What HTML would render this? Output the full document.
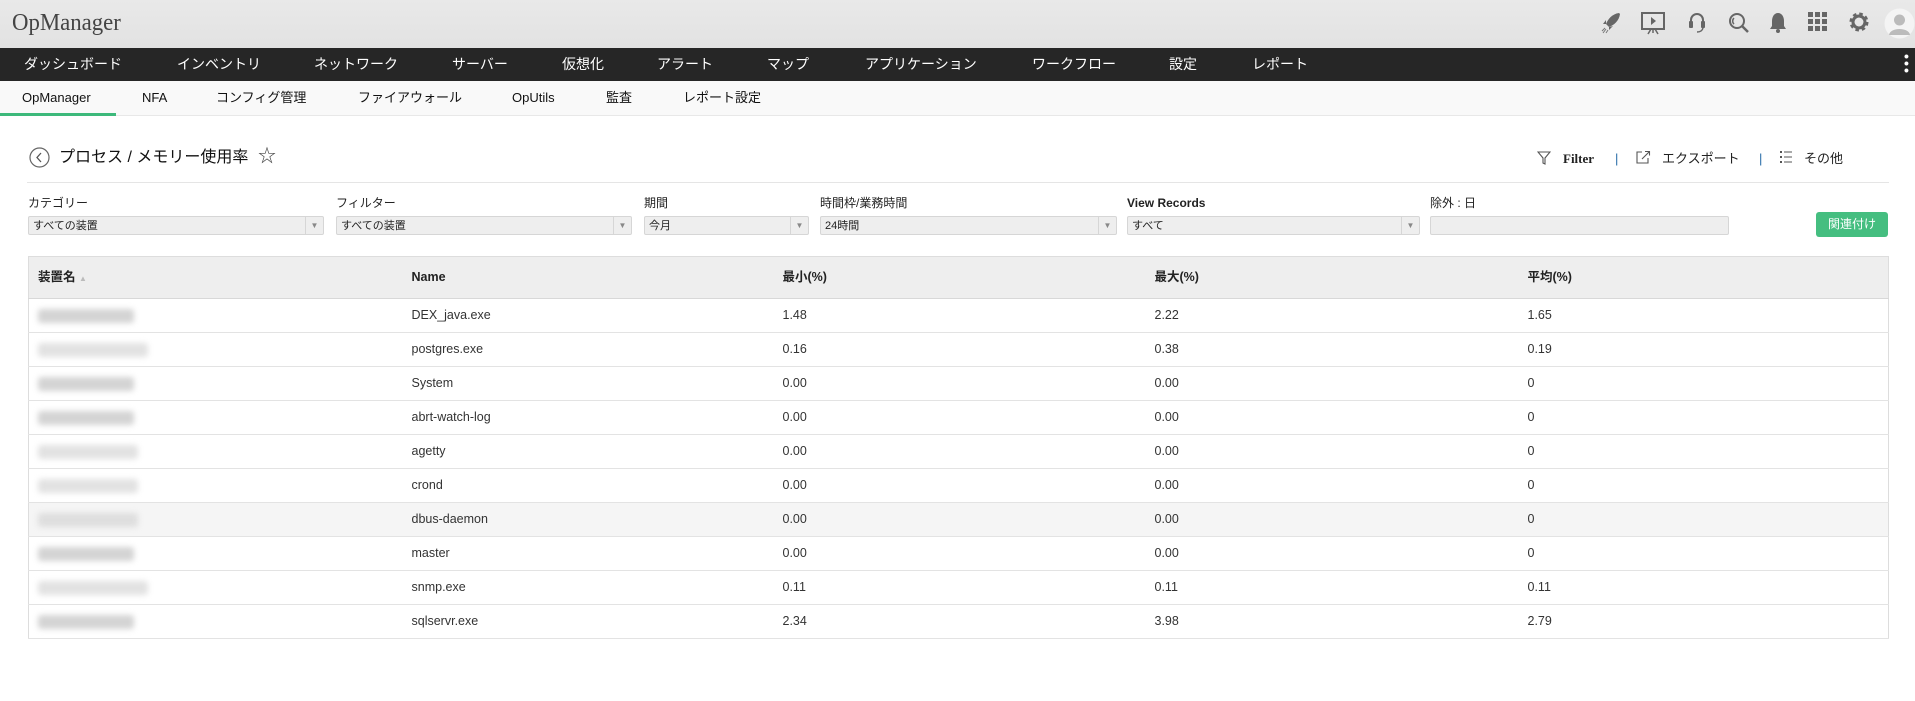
<!DOCTYPE html>
<html><head><meta charset="utf-8"><style>
*{box-sizing:border-box;margin:0;padding:0}
body{width:1915px;height:701px;overflow:hidden;background:#fff;font-family:"Liberation Sans","Noto Sans CJK JP",sans-serif;color:#222;position:relative}
.abs{position:absolute;white-space:nowrap;line-height:18px}
#hdr{position:absolute;left:0;top:0;width:1915px;height:48px;background:linear-gradient(#e9e9e9,#e2e2e2)}
#logo{left:12px;top:9px;font-family:"Liberation Serif","DejaVu Serif",serif;font-size:24px;line-height:28px;color:#444;transform:scaleX(.95);transform-origin:left}
#nav{position:absolute;left:0;top:48px;width:1915px;height:33px;background:#262626}
#nav span{position:absolute;top:8px;color:#fff;font-size:14px;line-height:17px}
#sub{position:absolute;left:0;top:81px;width:1915px;height:35px;background:#f9f9f9;border-bottom:1px solid #e8e8e8}
#sub span{position:absolute;top:9px;font-size:13px;line-height:16px;color:#111}
.lbl{position:absolute;top:196px;font-size:12px;line-height:14px;color:#222}
.sel{position:absolute;top:216px;height:19px;background:#eee;border:1px solid #d6d6d6;border-radius:2px;font-size:11px;line-height:14px;padding:2px 4px;color:#222}
.sel i{position:absolute;right:0;top:0;width:18px;height:17px;border-left:1px solid #d6d6d6;font-style:normal;color:#888;font-size:8px;text-align:center;line-height:17px}
table{position:absolute;left:28px;top:256px;width:1861px;border-collapse:collapse;border:1px solid #ddd;font-size:12.5px;line-height:15px}
th{height:42px;background:#eee;text-align:left;font-weight:bold;font-size:12.5px;border-bottom:1px solid #d8d8d8}
td{height:34px;border-bottom:1px solid #e3e3e3;color:#333}
th,td{padding-left:9px}
.b{display:inline-block;height:14px;background:#d4d4d4;filter:blur(3px);border-radius:3px;vertical-align:middle}
.ic{position:absolute;top:11px}
</style></head><body>
<div id="hdr"></div>
<div class="abs" id="logo">OpManager</div>
<svg class="ic" style="left:1600px" width="22" height="24" viewBox="0 0 22 24"><path d="M19 2 C12 3 8 8 6 13 L9 16 C14 14 19 10 20 3Z" fill="#666"/><path d="M6 13 L3 13 L6 9Z M9 16 L9 19 L13 15Z" fill="#666"/><path d="M5 17 L2 20 M6 18 L3 22 M8 19 L6 22" stroke="#777" stroke-width="1"/></svg>
<svg class="ic" style="left:1640px" width="26" height="26" viewBox="0 0 26 26"><rect x="2" y="2" width="22" height="16" fill="none" stroke="#666" stroke-width="2"/><path d="M11 6 L16 10 L11 14Z" fill="#666"/><path d="M13 18 V22 M8 23 L11 18 M18 23 L15 18" stroke="#666" stroke-width="1.5"/></svg>
<svg class="ic" style="left:1688px" width="18" height="24" viewBox="0 0 18 24"><path d="M3 12 V9 a6 6 0 0 1 12 0 V12" fill="none" stroke="#666" stroke-width="2"/><rect x="1" y="10" width="4" height="7" rx="1" fill="#666"/><rect x="13" y="10" width="4" height="7" rx="1" fill="#666"/><path d="M15 17 Q14 21 9 21" fill="none" stroke="#666" stroke-width="1.5"/></svg>
<svg class="ic" style="left:1728px" width="22" height="24" viewBox="0 0 22 24"><circle cx="9" cy="10" r="7" fill="none" stroke="#666" stroke-width="2"/><path d="M14 15 L20 21" stroke="#666" stroke-width="2.5"/><path d="M6 7 a4 4 0 0 0 0 6" fill="none" stroke="#666" stroke-width="1.5"/></svg>
<svg class="ic" style="left:1769px" width="18" height="24" viewBox="0 0 18 24"><path d="M9 2 C5 2 3 6 3 10 V15 L1 18 H17 L15 15 V10 C15 6 13 2 9 2Z" fill="#666"/><circle cx="9" cy="20" r="2" fill="#666"/></svg>
<svg class="ic" style="left:1808px;top:12px" width="20" height="20" viewBox="0 0 20 20" fill="#666"><rect x="0" y="0" width="5" height="5"/><rect x="7" y="0" width="5" height="5"/><rect x="14" y="0" width="5" height="5"/><rect x="0" y="7" width="5" height="5"/><rect x="7" y="7" width="5" height="5"/><rect x="14" y="7" width="5" height="5"/><rect x="0" y="14" width="5" height="5"/><rect x="7" y="14" width="5" height="5"/><rect x="14" y="14" width="5" height="5"/></svg>
<svg class="ic" style="left:1848px" width="22" height="22" viewBox="0 0 22 22"><circle cx="11" cy="11" r="7" fill="none" stroke="#666" stroke-width="5" stroke-dasharray="3 2.5"/><circle cx="11" cy="11" r="6" fill="none" stroke="#666" stroke-width="3"/></svg>
<svg class="ic" style="left:1884px;top:8px" width="31" height="31" viewBox="0 0 31 31"><circle cx="15.5" cy="15.5" r="15" fill="#f4f4f4"/><circle cx="15.5" cy="12" r="5.5" fill="#bbb"/><path d="M5 27 C6 19 25 19 26 27Z" fill="#bbb"/></svg>
<div id="nav">
<span style="left:24px">ダッシュボード</span><span style="left:177px">インベントリ</span><span style="left:314px">ネットワーク</span><span style="left:452px">サーバー</span><span style="left:562px">仮想化</span><span style="left:657px">アラート</span><span style="left:767px">マップ</span><span style="left:865px">アプリケーション</span><span style="left:1032px">ワークフロー</span><span style="left:1169px">設定</span><span style="left:1252px">レポート</span>
<span style="left:1904px;top:5px;font-weight:bold;line-height:7px;font-size:14px">•<br>•<br>•</span>
</div>
<div id="sub">
<span style="left:22px">OpManager</span><span style="left:142px">NFA</span><span style="left:216px">コンフィグ管理</span><span style="left:358px">ファイアウォール</span><span style="left:512px">OpUtils</span><span style="left:606px">監査</span><span style="left:683px">レポート設定</span>
<div style="position:absolute;left:0;top:32px;width:116px;height:3px;background:#3db97b"></div>
</div>
<svg class="abs" style="left:29px;top:147px" width="21" height="21" viewBox="0 0 21 21"><circle cx="10.5" cy="10.5" r="9.5" fill="none" stroke="#666" stroke-width="1.2"/><path d="M12 6 L8 10.5 L12 15" fill="none" stroke="#555" stroke-width="1.3"/></svg>
<div class="abs" style="left:59px;top:148px;font-size:16px;line-height:20px;color:#111">プロセス / メモリー使用率</div>
<div class="abs" style="left:258px;top:146px;font-size:18px;line-height:20px;color:#444">☆</div>
<svg class="abs" style="left:1537px;top:151px" width="14" height="14" viewBox="0 0 14 14"><path d="M1 1 H13 L8 7 V13 L6 12 V7Z" fill="none" stroke="#555" stroke-width="1.1"/></svg>
<div class="abs" style="left:1563px;top:150px;font-size:13px;font-family:'Liberation Serif',serif;font-weight:bold;color:#222">Filter</div>
<div class="abs" style="left:1615px;top:150px;font-size:13px;color:#2a6ea8">|</div>
<svg class="abs" style="left:1636px;top:150px" width="15" height="14" viewBox="0 0 15 14"><path d="M6 2 H1 V13 H12 V8" fill="none" stroke="#555" stroke-width="1.1"/><path d="M6 9 L13 2 M9 1.5 H13.5 V5.5" fill="none" stroke="#555" stroke-width="1.1"/></svg>
<div class="abs" style="left:1662px;top:150px;font-size:13px">エクスポート</div>
<div class="abs" style="left:1759px;top:150px;font-size:13px;color:#2a6ea8">|</div>
<svg class="abs" style="left:1780px;top:151px" width="12" height="12" viewBox="0 0 12 12" fill="#555"><rect x="0" y="0" width="2" height="2"/><rect x="4" y="0.5" width="8" height="1"/><rect x="0" y="5" width="2" height="2"/><rect x="4" y="5.5" width="8" height="1"/><rect x="0" y="10" width="2" height="2"/><rect x="4" y="10.5" width="8" height="1"/></svg>
<div class="abs" style="left:1804px;top:150px;font-size:13px">その他</div>
<div class="abs" style="left:27px;top:182px;width:1862px;height:1px;background:#e5e5e5"></div>
<div class="lbl" style="left:28px">カテゴリー</div>
<div class="lbl" style="left:336px">フィルター</div>
<div class="lbl" style="left:644px">期間</div>
<div class="lbl" style="left:820px">時間枠/業務時間</div>
<div class="lbl" style="left:1127px;font-weight:bold">View Records</div>
<div class="lbl" style="left:1430px">除外 : 日</div>
<div class="sel" style="left:28px;width:296px">すべての装置<i>▼</i></div>
<div class="sel" style="left:336px;width:296px">すべての装置<i>▼</i></div>
<div class="sel" style="left:644px;width:165px">今月<i>▼</i></div>
<div class="sel" style="left:820px;width:297px">24時間<i>▼</i></div>
<div class="sel" style="left:1127px;width:293px">すべて<i>▼</i></div>
<div class="sel" style="left:1430px;width:299px"></div>
<div class="abs" style="left:1816px;top:212px;width:72px;height:25px;background:#45be80;border-radius:3px;color:#fff;font-size:12px;text-align:center;line-height:25px">関連付け</div>
<table>
<tr><th style="width:374px">装置名 <span style="color:#bbb;font-size:8px">▲</span></th><th style="width:371px">Name</th><th style="width:372px">最小(%)</th><th style="width:373px">最大(%)</th><th>平均(%)</th></tr>
<tr><td><span class="b" style="width:96px"></span></td><td>DEX_java.exe</td><td>1.48</td><td>2.22</td><td>1.65</td></tr>
<tr><td><span class="b" style="width:110px;background:#e2e2e2"></span></td><td>postgres.exe</td><td>0.16</td><td>0.38</td><td>0.19</td></tr>
<tr><td><span class="b" style="width:96px"></span></td><td>System</td><td>0.00</td><td>0.00</td><td>0</td></tr>
<tr><td><span class="b" style="width:96px"></span></td><td>abrt-watch-log</td><td>0.00</td><td>0.00</td><td>0</td></tr>
<tr><td><span class="b" style="width:100px;background:#e2e2e2"></span></td><td>agetty</td><td>0.00</td><td>0.00</td><td>0</td></tr>
<tr><td><span class="b" style="width:100px;background:#e2e2e2"></span></td><td>crond</td><td>0.00</td><td>0.00</td><td>0</td></tr>
<tr style="background:#f5f5f5"><td><span class="b" style="width:100px;background:#dedede"></span></td><td>dbus-daemon</td><td>0.00</td><td>0.00</td><td>0</td></tr>
<tr><td><span class="b" style="width:96px"></span></td><td>master</td><td>0.00</td><td>0.00</td><td>0</td></tr>
<tr><td><span class="b" style="width:110px;background:#e2e2e2"></span></td><td>snmp.exe</td><td>0.11</td><td>0.11</td><td>0.11</td></tr>
<tr><td><span class="b" style="width:96px"></span></td><td>sqlservr.exe</td><td>2.34</td><td>3.98</td><td>2.79</td></tr>
</table>
</body></html>
